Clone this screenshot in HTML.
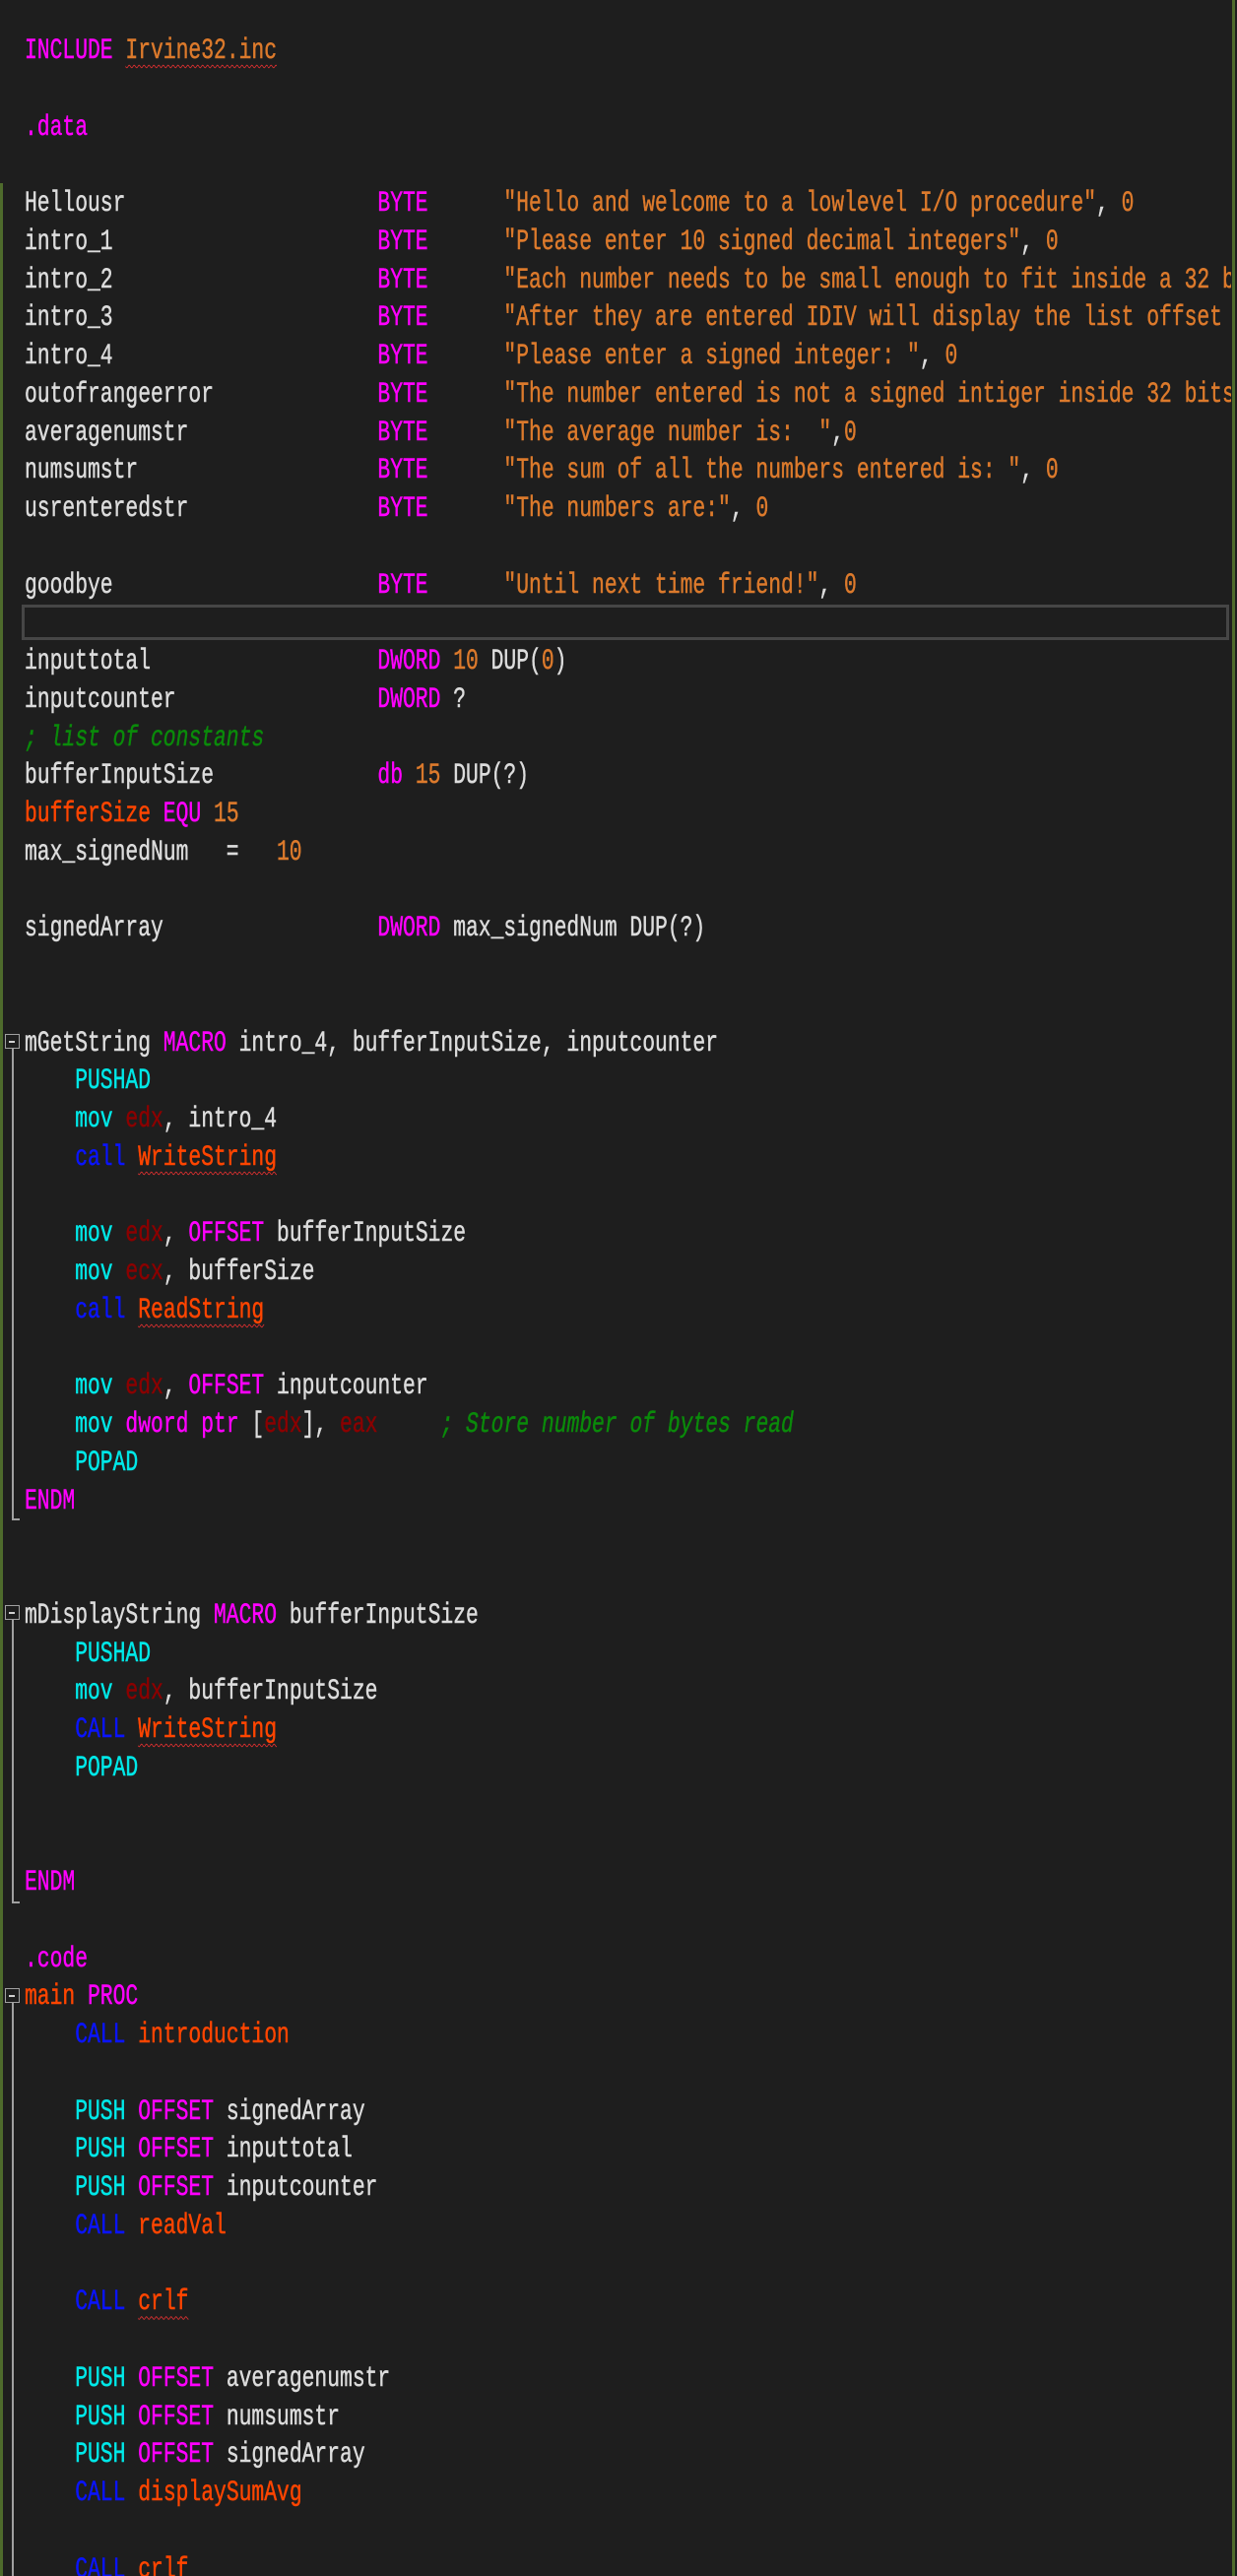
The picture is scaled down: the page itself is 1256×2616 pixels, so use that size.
<!DOCTYPE html>
<html><head><meta charset="utf-8"><style>
html,body{margin:0;padding:0;background:#1e1e1e;}
body{width:1256px;height:2616px;overflow:hidden;position:relative;}
#wrap{position:absolute;left:0;top:0;width:1250px;height:2616px;overflow:hidden;}
pre{position:absolute;left:25px;top:33px;margin:0;font-family:"Liberation Mono",monospace;font-size:30px;line-height:38.75px;color:#dcdcdc;transform:scaleX(0.711);transform-origin:0 0;white-space:pre;-webkit-text-stroke:0.5px currentColor;}
.k{color:#ff00ff}.s{color:#dc7a2c}.n{color:#dc7a2c}.c{color:#00e8e8}.b{color:#0a14ff}.o{color:#ff4500}.r{color:#8b0000}.g{color:#0a8a0a;font-style:italic}
.w{text-decoration:underline wavy #e03030;text-decoration-thickness:1px;text-underline-offset:6px}
.fb{position:absolute;left:5px;width:15px;height:15px;border:1.5px solid #a0a0a0;background:#1e1e1e;box-sizing:border-box}
.fb:after{content:"";position:absolute;left:3px;top:5.5px;width:6px;height:2px;background:#d0d0d0}
.fl{position:absolute;left:12px;width:2px;background:#a0a0a0}
.fh{position:absolute;left:12px;width:8px;height:2px;background:#a0a0a0}
</style></head><body>
<div style="position:absolute;left:0;top:186px;width:3px;height:2430px;background:#4e6b2c"></div>
<div style="position:absolute;left:1251px;top:0;width:3px;height:2616px;background:#4e6b2c"></div>
<div id="wrap">
<div style="position:absolute;left:22px;top:614px;width:1226px;height:36px;border:3px solid #464646;box-sizing:border-box"></div>
<div class="fb" style="top:1050px"></div><div class="fl" style="top:1065px;height:478px"></div><div class="fh" style="top:1542px"></div>
<div class="fb" style="top:1630px"></div><div class="fl" style="top:1645px;height:287px"></div><div class="fh" style="top:1931px"></div>
<div class="fb" style="top:2019px"></div><div class="fl" style="top:2034px;height:582px"></div>
<pre><span class="k">INCLUDE</span> <span class="s w">Irvine32.inc</span>

<span class="k">.data</span>

Hellousr                    <span class="k">BYTE</span>      <span class="s">"Hello and welcome to a lowlevel I/O procedure"</span>, <span class="n">0</span>
intro_1                     <span class="k">BYTE</span>      <span class="s">"Please enter 10 signed decimal integers"</span>, <span class="n">0</span>
intro_2                     <span class="k">BYTE</span>      <span class="s">"Each number needs to be small enough to fit inside a 32 bit register"</span>, <span class="n">0</span>
intro_3                     <span class="k">BYTE</span>      <span class="s">"After they are entered IDIV will display the list offset</span>
intro_4                     <span class="k">BYTE</span>      <span class="s">"Please enter a signed integer: "</span>, <span class="n">0</span>
outofrangeerror             <span class="k">BYTE</span>      <span class="s">"The number entered is not a signed intiger inside 32 bits</span>
averagenumstr               <span class="k">BYTE</span>      <span class="s">"The average number is:  "</span>,<span class="n">0</span>
numsumstr                   <span class="k">BYTE</span>      <span class="s">"The sum of all the numbers entered is: "</span>, <span class="n">0</span>
usrenteredstr               <span class="k">BYTE</span>      <span class="s">"The numbers are:"</span>, <span class="n">0</span>

goodbye                     <span class="k">BYTE</span>      <span class="s">"Until next time friend!"</span>, <span class="n">0</span>

inputtotal                  <span class="k">DWORD</span> <span class="n">10</span> DUP(<span class="n">0</span>)
inputcounter                <span class="k">DWORD</span> ?
<span class="g">; list of constants</span>
bufferInputSize             <span class="k">db</span> <span class="n">15</span> DUP(?)
<span class="o">bufferSize</span> <span class="k">EQU</span> <span class="n">15</span>
max_signedNum   =   <span class="n">10</span>

signedArray                 <span class="k">DWORD</span> max_signedNum DUP(?)


mGetString <span class="k">MACRO</span> intro_4, bufferInputSize, inputcounter
    <span class="c">PUSHAD</span>
    <span class="c">mov</span> <span class="r">edx</span>, intro_4
    <span class="b">call</span> <span class="o w">WriteString</span>

    <span class="c">mov</span> <span class="r">edx</span>, <span class="k">OFFSET</span> bufferInputSize
    <span class="c">mov</span> <span class="r">ecx</span>, bufferSize
    <span class="b">call</span> <span class="o w">ReadString</span>

    <span class="c">mov</span> <span class="r">edx</span>, <span class="k">OFFSET</span> inputcounter
    <span class="c">mov</span> <span class="k">dword ptr</span> [<span class="r">edx</span>], <span class="r">eax</span>     <span class="g">; Store number of bytes read</span>
    <span class="c">POPAD</span>
<span class="k">ENDM</span>


mDisplayString <span class="k">MACRO</span> bufferInputSize
    <span class="c">PUSHAD</span>
    <span class="c">mov</span> <span class="r">edx</span>, bufferInputSize
    <span class="b">CALL</span> <span class="o w">WriteString</span>
    <span class="c">POPAD</span>


<span class="k">ENDM</span>

<span class="k">.code</span>
<span class="o">main</span> <span class="k">PROC</span>
    <span class="b">CALL</span> <span class="o">introduction</span>

    <span class="c">PUSH</span> <span class="k">OFFSET</span> signedArray
    <span class="c">PUSH</span> <span class="k">OFFSET</span> inputtotal
    <span class="c">PUSH</span> <span class="k">OFFSET</span> inputcounter
    <span class="b">CALL</span> <span class="o">readVal</span>

    <span class="b">CALL</span> <span class="o w">crlf</span>

    <span class="c">PUSH</span> <span class="k">OFFSET</span> averagenumstr
    <span class="c">PUSH</span> <span class="k">OFFSET</span> numsumstr
    <span class="c">PUSH</span> <span class="k">OFFSET</span> signedArray
    <span class="b">CALL</span> <span class="o">displaySumAvg</span>

    <span class="b">CALL</span> <span class="o">crlf</span>
</pre>
</div>
</body></html>
